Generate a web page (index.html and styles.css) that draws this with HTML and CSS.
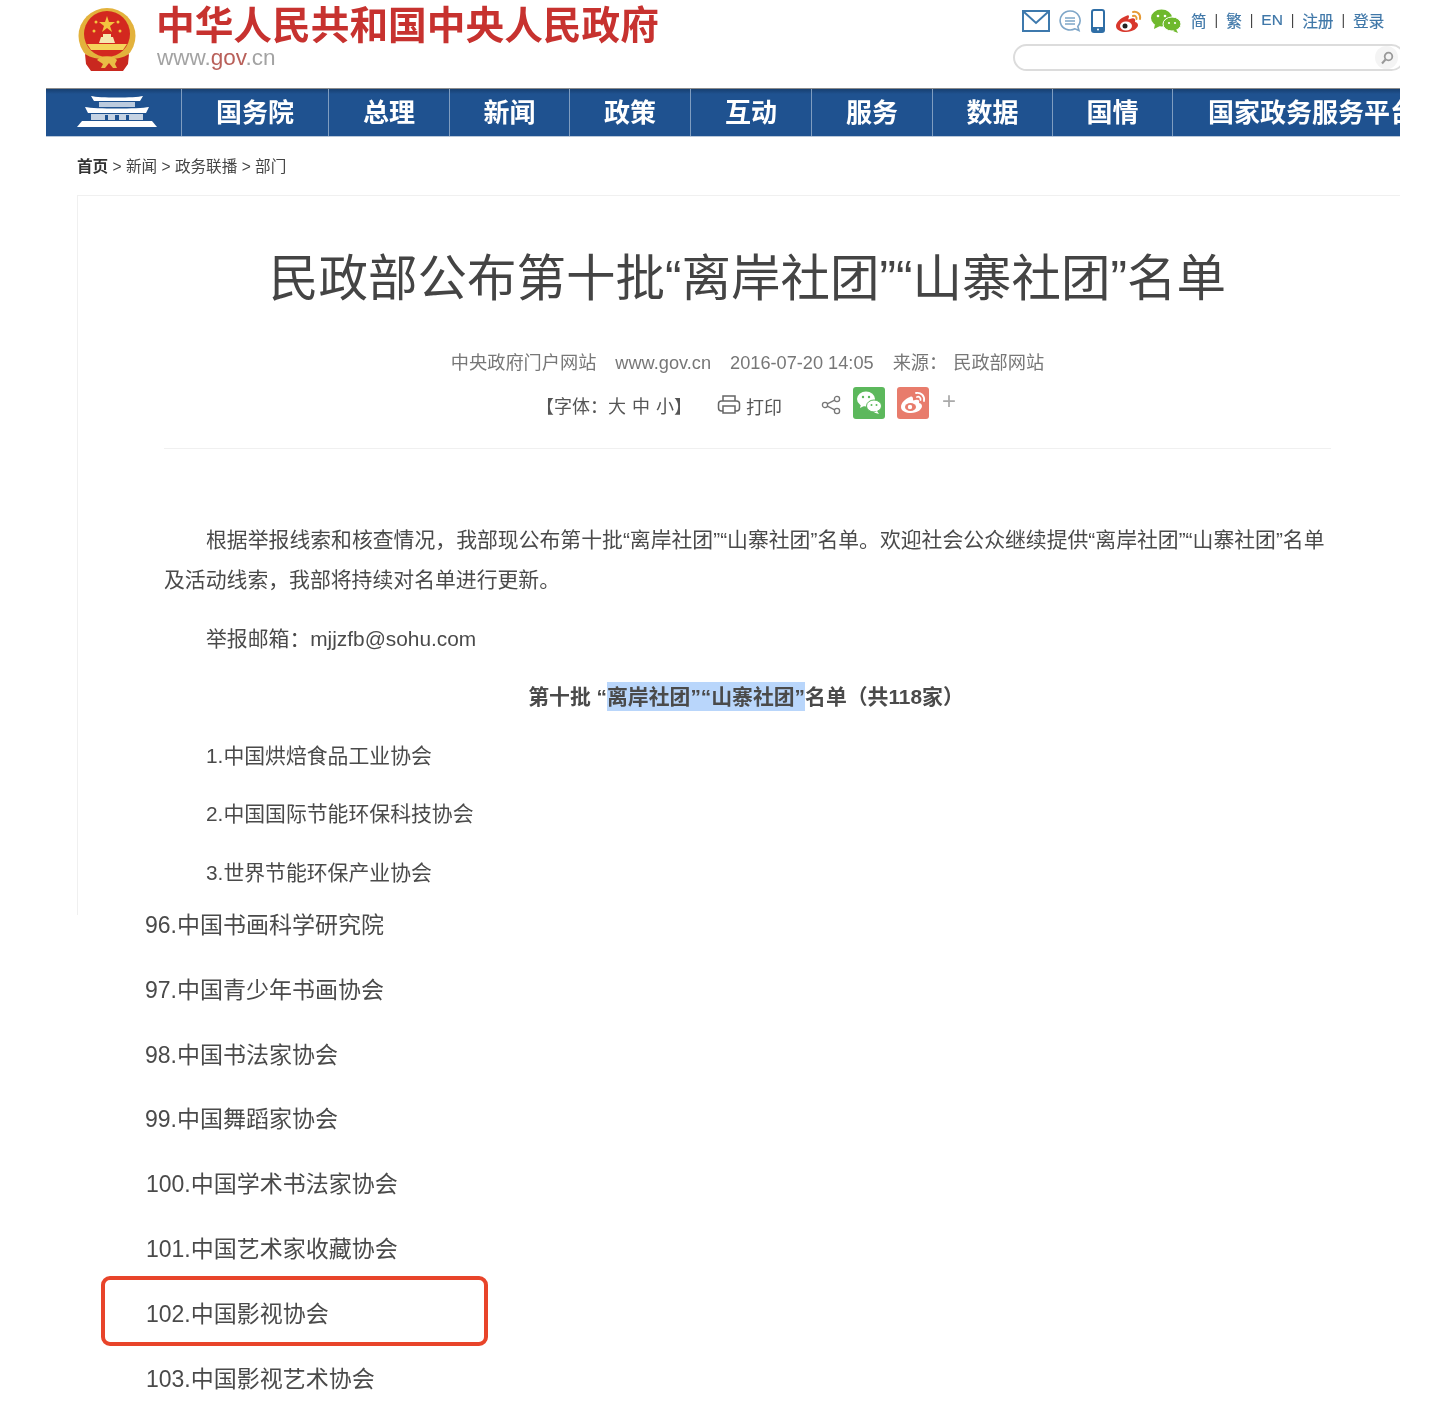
FILE: index.html
```html
<!DOCTYPE html>
<html lang="zh-CN">
<head>
<meta charset="utf-8">
<title>民政部公布第十批“离岸社团”“山寨社团”名单</title>
<link rel="stylesheet" href="styles.css">
</head>
<body>
<div class="page">
  <header class="masthead">
    <div class="brand">
      <svg class="emblem" viewBox="0 0 60 64" width="60" height="64">
        <ellipse cx="30" cy="28" rx="28.500" ry="28" fill="#e3b23c"/>
        <ellipse cx="30" cy="26" rx="23" ry="23" fill="#d3281f"/>
        <polygon points="30,8 32,14 38,14 33,18 35,24 30,20 25,24 27,18 22,14 28,14" fill="#f3c53f"/>
        <circle cx="19" cy="14" r="1.500" fill="#f3c53f"/><circle cx="41" cy="14" r="1.500" fill="#f3c53f"/>
        <circle cx="17" cy="23" r="1.500" fill="#f3c53f"/><circle cx="43" cy="23" r="1.500" fill="#f3c53f"/>
        <path d="M22 35h16l-2-6H24zM26 29v-3h8v3z" fill="#f6e7b0"/>
        <path d="M10 36h40l-4 6H14z" fill="#f5d35a"/>
        <path d="M8 46c6 4 12 5 22 5s16-1 22-5l-1 10-5 7H14l-5-7z" fill="#c9281f"/>
        <path d="M20 52c4-5 16-5 20 0l-2 4 2 4h-4l-4-5-4 5h-4l2-4z" fill="#e9bc45"/>
      </svg>
      <div class="brand-text">
        <div class="brand-name">中华人民共和国中央人民政府</div>
        <div class="brand-url">www.<span class="brand-gov">gov</span>.cn</div>
      </div>
    </div>
    <div class="tools">
      <div class="tool-row">
        <svg class="ico ico-mail" viewBox="0 0 28 22" width="28" height="22"><rect x="1" y="1" width="26" height="20" fill="none" stroke="#3d79ad" stroke-width="2"/><path d="M2 2l12 11L26 2" fill="none" stroke="#3d79ad" stroke-width="2"/></svg>
        <svg class="ico ico-chat" viewBox="0 0 22 22" width="22" height="22"><path d="M11 1a10 9.500 0 1 0 5 17.800l4 1.700-1.200-4A10 9.500 0 0 0 11 1z" fill="none" stroke="#7ea6c8" stroke-width="1.600"/><path d="M6 8h10M6 11h10M6 14h10" stroke="#7ea6c8" stroke-width="1.400"/></svg>
        <svg class="ico ico-phone" viewBox="0 0 14 24" width="14" height="24"><rect x="1" y="1" width="12" height="22" rx="2" fill="#fff" stroke="#2f6ea6" stroke-width="2"/><rect x="1" y="18" width="12" height="5" fill="#2f6ea6"/><circle cx="7" cy="20.500" r="1" fill="#fff"/></svg>
        <svg class="ico ico-weibo" viewBox="0 0 28 24" width="28" height="24"><path d="M11 7C5 9 1 14 1 17c0 4 5 6 10 6 7 0 12-4 12-7 0-2-2-3-3-3 1-3-1-5-5-3-2 1-2 0-1-2 0-2-1-2-3-1z" fill="#d8372c"/><ellipse cx="11" cy="17" rx="6" ry="4.500" fill="#fff"/><circle cx="10" cy="17" r="2.500" fill="#222"/><path d="M18 3c4-1 8 2 7 7M18 7c2-1 4 1 3.500 3" fill="none" stroke="#e69a35" stroke-width="2" stroke-linecap="round"/></svg>
        <svg class="ico ico-wechat" viewBox="0 0 32 24" width="32" height="24"><ellipse cx="11.500" cy="9" rx="10.500" ry="8.500" fill="#6fb92d"/><path d="M5 15l-1 5 6-3z" fill="#6fb92d"/><ellipse cx="22" cy="15" rx="9" ry="7" fill="#6fb92d" stroke="#fff"/><path d="M26 20l2 4-5-2z" fill="#6fb92d"/><circle cx="8" cy="7" r="1.300" fill="#fff"/><circle cx="15" cy="7" r="1.300" fill="#fff"/><circle cx="19" cy="14" r="1.100" fill="#fff"/><circle cx="25" cy="14" r="1.100" fill="#fff"/></svg>
        <nav class="tool-links">
          <a>简</a><i>|</i><a>繁</a><i>|</i><a>EN</a><i>|</i><a>注册</a><i>|</i><a>登录</a>
        </nav>
      </div>
      <div class="search">
        <span class="search-btn">
          <svg viewBox="0 0 14 14" width="14" height="14"><circle cx="8.500" cy="5.500" r="3.800" fill="none" stroke="#999" stroke-width="1.800"/><path d="M5.500 8.500L2 12.500" stroke="#999" stroke-width="2"/></svg>
        </span>
      </div>
    </div>
  </header>

  <nav class="mainnav">
    <a class="nav-home">
      <svg viewBox="0 0 80 34" width="80" height="34"><g fill="#fff"><path d="M14 1c8 2 44 2 52 0l-3 5H17z"/><path d="M22 7h36v5H22z" opacity=".7"/><path d="M8 12c10 2 54 2 64 0l-3 6H11z"/><path d="M14 19h52v6H14z" opacity=".75"/><path d="M5 26h70l5 6H0z"/></g><g fill="#1f5290"><path d="M28 20h3v5h-3zM38 20h4v5h-4zM49 20h3v5h-3z"/></g></svg>
    </a>
    <a class="nav-item">国务院</a>
    <a class="nav-item">总理</a>
    <a class="nav-item">新闻</a>
    <a class="nav-item">政策</a>
    <a class="nav-item">互动</a>
    <a class="nav-item">服务</a>
    <a class="nav-item">数据</a>
    <a class="nav-item">国情</a>
    <a class="nav-item nav-last">国家政务服务平台</a>
  </nav>

  <div class="crumbs"><b>首页</b> &gt; 新闻 &gt; 政务联播 &gt; 部门</div>

  <article class="article">
    <h1 class="title">民政部公布第十批“离岸社团”“山寨社团”名单</h1>
    <div class="meta">
      <span>中央政府门户网站</span><span>www.gov.cn</span><span>2016-07-20 14:05</span><span class="meta-src"><span>来源：</span><span>民政部网站</span></span>
    </div>
    <div class="actions">
      <span class="fontsize">【字体：<span class="sizes">大 中 小</span>】</span>
      <span class="print">
        <svg viewBox="0 0 24 22" width="24" height="22"><path d="M6 7V2h12v5" fill="none" stroke="#666" stroke-width="1.500"/><rect x="1.500" y="7" width="21" height="10" rx="3" fill="none" stroke="#666" stroke-width="1.500"/><rect x="6" y="12" width="12" height="7" fill="#fff" stroke="#666" stroke-width="1.500"/></svg>
        打印
      </span>
      <span class="share">
        <svg class="share-ico" viewBox="0 0 20 20" width="20" height="20"><circle cx="4" cy="10" r="2.600" fill="none" stroke="#777" stroke-width="1.300"/><circle cx="16" cy="4" r="2.600" fill="none" stroke="#777" stroke-width="1.300"/><circle cx="16" cy="16" r="2.600" fill="none" stroke="#777" stroke-width="1.300"/><path d="M6.300 8.800l7.400-3.600M6.300 11.200l7.400 3.600" stroke="#777" stroke-width="1.300"/></svg>
        <span class="share-btn share-wx">
          <svg viewBox="0 0 32 32" width="32" height="32"><ellipse cx="13" cy="12" rx="9" ry="7.500" fill="#fff"/><path d="M8 17l-1 4 5-2.500z" fill="#fff"/><ellipse cx="21" cy="19" rx="7.500" ry="6" fill="#fff" stroke="#5cb85c"/><path d="M24 24l2 3-5-1.500z" fill="#fff"/><circle cx="10" cy="10" r="1.200" fill="#5cb85c"/><circle cx="16" cy="10" r="1.200" fill="#5cb85c"/><circle cx="18.500" cy="18" r="1" fill="#5cb85c"/><circle cx="23.500" cy="18" r="1" fill="#5cb85c"/></svg>
        </span>
        <span class="share-btn share-wb">
          <svg viewBox="0 0 32 32" width="32" height="32"><path d="M13 10C8 12 4 16 4 20c0 4 5 6 10 6 7 0 11-4 11-7 0-2-2-3-3-3 1-3-1-4-4-3-2 1-2 0-2-1 0-2-1-3-3-2z" fill="#fff"/><ellipse cx="13.500" cy="20" rx="5.500" ry="4" fill="#e87c6c"/><circle cx="13" cy="20" r="2.200" fill="#fff"/><path d="M19 6c5-1 9 3 8 8M20 10c2-1 4 1 3.500 3" fill="none" stroke="#fff" stroke-width="1.800" stroke-linecap="round"/></svg>
        </span>
        <span class="share-more">+</span>
      </span>
    </div>
    <div class="body">
      <p class="para">根据举报线索和核查情况，我部现公布第十批“离岸社团”“山寨社团”名单。欢迎社会公众继续提供“离岸社团”“山寨社团”名单及活动线索，我部将持续对名单进行更新。</p>
      <p class="para">举报邮箱：mjjzfb@sohu.com</p>
      <p class="para para-head">第十批 “<mark class="hl">离岸社团”“山寨社团”</mark>名单（共118家）</p>
      <p class="para">1.中国烘焙食品工业协会</p>
      <p class="para">2.中国国际节能环保科技协会</p>
      <p class="para">3.世界节能环保产业协会</p>
    </div>
  </article>

  <ul class="list">
    <li>96.中国书画科学研究院</li>
    <li>97.中国青少年书画协会</li>
    <li>98.中国书法家协会</li>
    <li>99.中国舞蹈家协会</li>
    <li class="wide">100.中国学术书法家协会</li>
    <li class="wide">101.中国艺术家收藏协会</li>
    <li class="wide flagged">102.中国影视协会<span class="flag"></span></li>
    <li class="wide">103.中国影视艺术协会</li>
  </ul>
</div>
</body>
</html>
```
FILE: styles.css
```css
* { box-sizing: border-box; }
html, body { margin: 0; padding: 0; background: #fff; }
body {
  font-family: "Liberation Sans", "Noto Sans CJK SC", sans-serif;
  color: #4a4a4a;
}
.page {
  width: 1354px;
  height: 1424px;
  margin-left: 46px;
  overflow: hidden;
  filter: blur(0.5px);
}
.masthead {
  height: 88px;
  display: flex;
  justify-content: space-between;
  padding-left: 31px;
}
.brand { display: flex; align-items: flex-start; gap: 19px; padding-top: 8px; }
.emblem { display: block; }
.brand-text { margin-top: -7px; }
.brand-name {
  font-size: 38.700px;
  line-height: 50px;
  font-weight: 700;
  color: #c7322f;
  white-space: nowrap;
}
.brand-url { font-size: 22.500px; line-height: 24px; margin: -5px 0 0 1px; color: #a3a3a3; }
.brand-gov { color: #b9605a; }
.tools { width: 387px; padding-top: 8px; overflow: hidden; }
.tool-row { display: flex; align-items: center; height: 25px; padding-left: 9px; gap: 9px; }
.ico { display: block; flex: none; }
.ico-phone { margin-left: 1px; }
.ico-weibo { margin-left: 1px; margin-right: -2px; }
.tool-links {
  display: flex;
  align-items: center;
  gap: 8px;
  font-size: 15.500px;
  color: #3f77a8;
  white-space: nowrap;
  margin-top: -2px;
}
.tool-links a { -webkit-text-stroke: 0.2px #3f77a8; }
.tool-links i { font-style: normal; color: #444; font-size: 14px; }
.search {
  margin-top: 11px;
  height: 27px;
  width: 392px;
  border: 2px solid #dcdcdc;
  border-radius: 14px;
  background: #fff;
  display: flex;
  justify-content: flex-end;
  align-items: center;
}
.search-btn {
  width: 23px;
  height: 23px;
  margin-right: 5px;
  border-radius: 50%;
  background: #f4f4f4;
  display: flex;
  align-items: center;
  justify-content: center;
}
.mainnav {
  height: 49px;
  display: grid;
  grid-template-columns: 135px 147px 121px 120px 121px 121px 121px 120px 120px 1fr;
  background: linear-gradient(#173f70 0, #1f5290 5px);
  border-top: 1px solid #8c8c8c;
  border-bottom: 1px solid #b9c8da;
  overflow: hidden;
}
.nav-item, .nav-home {
  display: flex;
  align-items: center;
  justify-content: center;
  color: #fff;
  white-space: nowrap;
}
.nav-item {
  border-left: 1px solid #7f9dc0;
  font-size: 26px;
  font-weight: 700;
  padding-bottom: 5px;
}
.nav-home { padding: 0 0 1px 6px; }
.nav-last { justify-content: flex-start; padding-left: 35px; overflow: hidden; }
.crumbs {
  height: 58px;
  padding: 19px 0 0 31px;
  font-size: 15.600px;
  line-height: 22px;
  color: #444;
}
.crumbs b { color: #333; }
.article {
  margin-left: 31px;
  height: 720px;
  padding: 0 69px 0 86px;
  border-left: 1px solid #f0f0f0;
  border-top: 1px solid #f0f0f0;
}
.title {
  margin: 48px 0 0;
  font-size: 49.500px;
  line-height: 70px;
  font-weight: 400;
  color: #444;
  text-align: center;
  white-space: nowrap;
}
.meta {
  margin-top: 36px;
  display: flex;
  justify-content: center;
  gap: 19px;
  font-size: 18.200px;
  line-height: 26px;
  color: #777;
  white-space: nowrap;
}
.meta-src { display: flex; gap: 6px; }
.actions {
  height: 73px;
  display: flex;
  justify-content: center;
  align-items: flex-start;
  padding: 11px 3px 0 0;
  border-bottom: 1px solid #f0f0f0;
  font-size: 18px;
  color: #555;
  white-space: nowrap;
}
.fontsize { margin-top: 7px; line-height: 26px; margin-right: 25px; }
.sizes { word-spacing: 1px; }
.print { display: flex; align-items: center; gap: 5px; margin-top: 7px; line-height: 26px; margin-right: 39px; }
.print svg { margin-bottom: 6px; }
.share { display: flex; align-items: flex-start; }
.share-ico { margin-top: 8px; margin-right: 12px; }
.share-btn { width: 32px; height: 32px; border-radius: 3px; display: block; margin-right: 12px; }
.share-btn svg { display: block; }
.share-wx { background: #5cb85c; }
.share-wb { background: #e87c6c; }
.share-more { color: #aaa; font-size: 24px; line-height: 28px; margin-left: 1px; }
.body { padding-top: 71px; }
.para {
  margin: 0 0 18.500px;
  font-size: 20.850px;
  line-height: 40px;
  text-indent: 42px;
  color: #4a4a4a;
}
.para-head { font-weight: 700; text-align: center; text-indent: 0; padding-right: 3px; }
.hl { background: #b9d6fb; color: inherit; padding: 3px 0; }
.list {
  list-style: none;
  margin: -22px 0 0;
  padding: 0 0 0 99px;
  font-size: 23px;
  line-height: 64.800px;
  color: #4a4a4a;
}
.wide { padding-left: 1px; }
.flagged { position: relative; }
.flag {
  position: absolute;
  left: -44px;
  top: -6px;
  width: 387px;
  height: 70px;
  border: 4px solid #e8442a;
  border-radius: 9px;
}
```
